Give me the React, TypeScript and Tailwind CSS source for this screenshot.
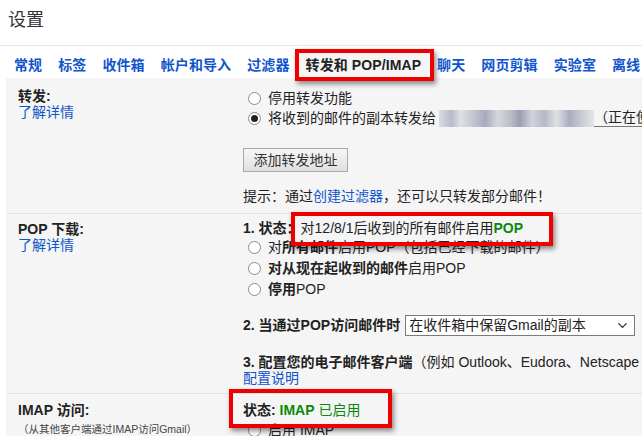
import * as React from 'react';
import { ChevronDown } from 'lucide-react';

const FONT = 'font-["Liberation_Sans","Noto_Sans_CJK_SC",sans-serif]';

const TABS = ['常规', '标签', '收件箱', '帐户和导入', '过滤器', '转发和 POP/IMAP', '聊天', '网页剪辑', '实验室', '离线'];
const ACTIVE_TAB = '转发和 POP/IMAP';

function Radio({ checked = false }: { checked?: boolean }) {
  return (
    <span className="ml-[5px] mr-[7px] flex h-[13px] w-[13px] shrink-0 items-center justify-center rounded-full border border-[#8a8a8a] bg-white">
      {checked && <span className="h-[7px] w-[7px] rounded-full bg-[#222]" />}
    </span>
  );
}

// Red annotation frame drawn over the screenshot
function Highlight({ className }: { className: string }) {
  return (
    <div
      className={`pointer-events-none absolute z-10 border-4 border-[#ee0000] shadow-[2px_3px_5px_rgba(0,0,0,0.45)] ${className}`}
    />
  );
}

export default function App() {
  return (
    <div className={`h-[436px] w-[642px] overflow-hidden whitespace-nowrap bg-white text-[14px] text-[#222] ${FONT}`}>
      {/* Title */}
      <div className="h-[46px] border-b border-[#e5e5e5] pl-[8px] pt-[8px] text-[18px] leading-[24px] text-[#333]">
        设置
      </div>

      {/* Tabs */}
      <div className="flex h-[32px] items-end pl-[6px] tracking-[0.1px]">
        {TABS.map((tab) =>
          tab === ACTIVE_TAB ? (
            <div key={tab} className="relative h-[25px] bg-[#f5f5f5] px-[8px] font-bold leading-[25px] text-[#222]">
              {tab}
              <Highlight className="-top-[4px] -bottom-[3px] -left-[3px] -right-[5px]" />
            </div>
          ) : (
            <div key={tab} className="h-[25px] px-[8px] font-bold leading-[25px] text-[#1155cc]">
              {tab}
            </div>
          )
        )}
      </div>

      {/* Content */}
      <div className="ml-[6px] bg-[#f5f5f5]">
        {/* 转发 */}
        <div className="flex">
          <div className="w-[237px] shrink-0 pl-[12px] pt-[10px] leading-[16px]">
            <div className="font-bold">转发:</div>
            <div className="text-[#1155cc]">了解详情</div>
          </div>
          <div className="pt-[10px] pb-[7px]">
            <div className="flex h-[20px] items-center">
              <Radio />
              <span>停用转发功能</span>
            </div>
            <div className="flex h-[20px] items-center">
              <Radio checked />
              <span>将收到的邮件的副本转发给</span>
              <span className="ml-[3px] h-[17px] w-[155px] bg-[linear-gradient(90deg,#dcdce4_0%,#b9bac8_8%,#e0e0e6_14%,#c4c5d0_22%,#a8abbd_30%,#d6d6de_38%,#bcbdc8_46%,#9a9eb2_52%,#d2d2da_60%,#b6b9c6_68%,#e0e0e6_76%,#a9adbf_84%,#cacad4_92%,#e4e4ea_100%)]" />
              <span className="border-b border-[#777] leading-[17px]">（正在使用）</span>
            </div>
            <button className="mt-[20px] h-[24px] w-[105px] border border-[#a9a9a9] bg-[linear-gradient(180deg,#f6f6f6,#e0e0e0)] text-[14px] text-[#333]">
              添加转发地址
            </button>
            <div className="mt-[14px] leading-[20px]">
              提示：通过<span className="text-[#1155cc]">创建过滤器</span>，还可以只转发部分邮件！
            </div>
          </div>
        </div>

        <div className="ml-[2px] h-px bg-[#e2e2e2]" />

        {/* POP 下载 */}
        <div className="flex">
          <div className="w-[237px] shrink-0 pl-[12px] pt-[7px] leading-[16px]">
            <div className="font-bold">POP 下载:</div>
            <div className="text-[#1155cc]">了解详情</div>
          </div>
          <div className="relative pt-[5px] pb-[7px]">
            <Highlight className="-top-[2px] left-[48px] h-[34px] w-[262px]" />
            <div className="h-[18px] leading-[18px]">
              <span className="font-bold">1. 状态：</span>对12/8/1后收到的所有邮件启用
              <span className="font-bold text-[#0a8a0a]">POP</span>
            </div>
            <div className="flex h-[21px] items-center">
              <Radio />
              <span>
                对<b>所有邮件</b>启用POP（包括已经下载的邮件）
              </span>
            </div>
            <div className="flex h-[21px] items-center">
              <Radio />
              <span>
                <b>对从现在起收到的邮件</b>启用POP
              </span>
            </div>
            <div className="flex h-[21px] items-center">
              <Radio />
              <span>
                <b>停用</b>POP
              </span>
            </div>
            <div className="mt-[15px] flex h-[21px] items-center">
              <span className="mr-[5px] font-bold">2. 当通过POP访问邮件时</span>
              <div className="flex h-[21px] w-[230px] items-center justify-between border border-[#7a7a7a] bg-white pl-[3px] pr-[4px]">
                <span>在收件箱中保留Gmail的副本</span>
                <ChevronDown size={15} strokeWidth={2.2} className="text-[#333]" />
              </div>
            </div>
            <div className="mt-[18px] leading-[16px]">
              <span className="font-bold">3. 配置您的电子邮件客户端</span>（例如 Outlook、Eudora、Netscape Mail）
            </div>
            <div className="leading-[16px] text-[#1155cc]">配置说明</div>
          </div>
        </div>

        <div className="ml-[2px] h-px bg-[#e2e2e2]" />

        {/* IMAP 访问 */}
        <div className="flex h-[60px]">
          <div className="w-[237px] shrink-0 pl-[12px] pt-[6px]">
            <div className="font-bold leading-[20px]">IMAP 访问:</div>
            <div className="mt-[2px] text-[10.5px] leading-[14px] text-[#444]">（从其他客户端通过IMAP访问Gmail）</div>
          </div>
          <div className="relative pt-[6px]">
            <Highlight className="-top-[5px] -left-[14px] h-[39px] w-[163px]" />
            <div className="leading-[20px]">
              <span className="font-bold">状态:</span>{' '}
              <span className="font-bold text-[#0a8a0a]">IMAP</span>{' '}
              <span className="text-[#0a8a0a]">已启用</span>
            </div>
            <div className="flex h-[20px] items-center">
              <Radio />
              <span>启用 IMAP</span>
            </div>
          </div>
        </div>
      </div>
    </div>
  );
}
